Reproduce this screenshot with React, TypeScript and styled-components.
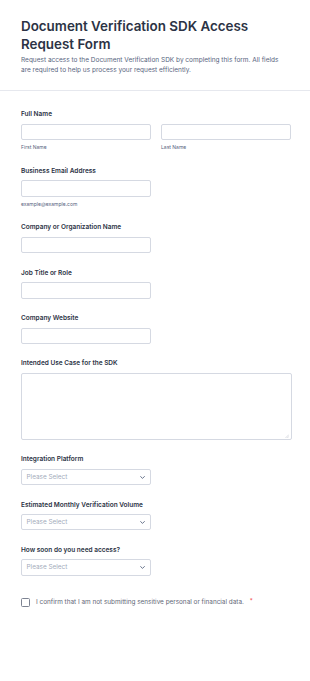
import React from 'react';
import styled, { createGlobalStyle } from 'styled-components';

const GlobalStyle = createGlobalStyle`
  html, body {
    margin: 0;
    padding: 0;
    background: #ffffff;
  }
  body {
    font-family: Inter, "Noto Sans", sans-serif;
    color: #2c3345;
  }
`;

type FieldProps = {
  label: string;
  children: React.ReactNode;
};

const Field = ({ label, children }: FieldProps) => (
  <FieldBlock>
    <Label>{label}</Label>
    {children}
  </FieldBlock>
);

const SelectField = ({ label }: { label: string }) => (
  <Field label={label}>
    <SelectBox>
      <span>Please Select</span>
      <svg width="5" height="3" viewBox="0 0 5 3" fill="none">
        <path d="M0.6 0.5l1.9 1.9 1.9-1.9" stroke="#57647e" strokeWidth="0.9" strokeLinecap="round" strokeLinejoin="round" />
      </svg>
    </SelectBox>
  </Field>
);

const App = () => {
  return (
    <>
      <GlobalStyle />
      <Page>
        <Header>
          <Title>Document Verification SDK Access Request Form</Title>
          <Subtitle>
            Request access to the Document Verification SDK by completing this form. All fields
            are required to help us process your request efficiently.
          </Subtitle>
        </Header>
        <Form>
          <Field label="Full Name">
            <NameRow>
              <NameCol>
                <Input />
                <SubLabel>First Name</SubLabel>
              </NameCol>
              <NameCol>
                <Input />
                <SubLabel>Last Name</SubLabel>
              </NameCol>
            </NameRow>
          </Field>
          <Field label="Business Email Address">
            <Input short />
            <SubLabel>example@example.com</SubLabel>
          </Field>
          <Field label="Company or Organization Name">
            <Input short />
          </Field>
          <Field label="Job Title or Role">
            <Input short />
          </Field>
          <Field label="Company Website">
            <Input short />
          </Field>
          <Field label="Intended Use Case for the SDK">
            <TextArea>
              <Grip viewBox="0 0 4 4">
                <path d="M4 0.5L0.5 4M4 2.3L2.3 4" stroke="#b4bac6" strokeWidth="0.5" />
              </Grip>
            </TextArea>
          </Field>
          <SelectField label="Integration Platform" />
          <SelectField label="Estimated Monthly Verification Volume" />
          <SelectField label="How soon do you need access?" />
          <CheckRow>
            <CheckBox />
            <CheckText>
              I confirm that I am not submitting sensitive personal or financial data.
              <Required>*</Required>
            </CheckText>
          </CheckRow>
        </Form>
      </Page>
    </>
  );
};

const Page = styled.div`
  width: 310px;
  min-height: 681px;
  background: #ffffff;
`;

const Header = styled.header`
  padding: 16.6px 21px 15.6px;
  border-bottom: 1px solid #e6e8ee;
`;

const Title = styled.h1`
  margin: 0;
  font-size: 13.4px;
  line-height: 18.6px;
  font-weight: 600;
  color: #2c3345;
`;

const Subtitle = styled.p`
  margin: 0.8px 0 0;
  font-size: 6.5px;
  line-height: 10px;
  color: #57647e;
`;

const Form = styled.div`
  display: flex;
  flex-direction: column;
  gap: 14.4px;
  padding: 17.8px 19px 0 21px;
`;

const FieldBlock = styled.div`
  display: flex;
  flex-direction: column;
`;

const Label = styled.div`
  font-size: 6.5px;
  line-height: 10px;
  font-weight: 600;
  color: #2c3345;
  margin-bottom: 4.6px;
`;

const NameRow = styled.div`
  display: grid;
  grid-template-columns: 130px 130px;
  gap: 10px;
`;

const NameCol = styled.div`
  display: flex;
  flex-direction: column;
`;

const Input = styled.div<{ short?: boolean }>`
  box-sizing: border-box;
  width: ${(p) => (p.short ? '129.7px' : '100%')};
  height: 16.4px;
  border: 1px solid #d5d9e2;
  border-radius: 2px;
  background: #ffffff;
`;

const SubLabel = styled.div`
  font-size: 5px;
  line-height: 7px;
  color: #57647e;
  margin-top: 4.3px;
`;

const TextArea = styled.div`
  position: relative;
  box-sizing: border-box;
  width: 270.5px;
  height: 67px;
  border: 1px solid #d5d9e2;
  border-radius: 2px;
`;

const Grip = styled.svg`
  position: absolute;
  right: 1.5px;
  bottom: 1.5px;
  width: 4px;
  height: 4px;
`;

const SelectBox = styled.div`
  box-sizing: border-box;
  width: 129.5px;
  height: 16.2px;
  border: 1px solid #d5d9e2;
  border-radius: 2px;
  display: flex;
  align-items: center;
  justify-content: space-between;
  padding: 0 4.3px 0 4.5px;
  font-size: 6.4px;
  color: #a3abbb;
`;

const CheckRow = styled.label`
  display: flex;
  align-items: center;
  gap: 6.5px;
  margin-top: 7.5px;
`;

const CheckBox = styled.span`
  box-sizing: border-box;
  width: 8.5px;
  height: 8.5px;
  border: 1px solid #7d8392;
  border-radius: 1.5px;
  flex: none;
`;

const CheckText = styled.span`
  font-size: 6.4px;
  line-height: 9px;
  color: #5f6878;
`;

const Required = styled.span`
  color: #f23a3c;
  margin-left: 6px;
  position: relative;
  top: -1.5px;
  font-size: 6px;
`;

export default App;
